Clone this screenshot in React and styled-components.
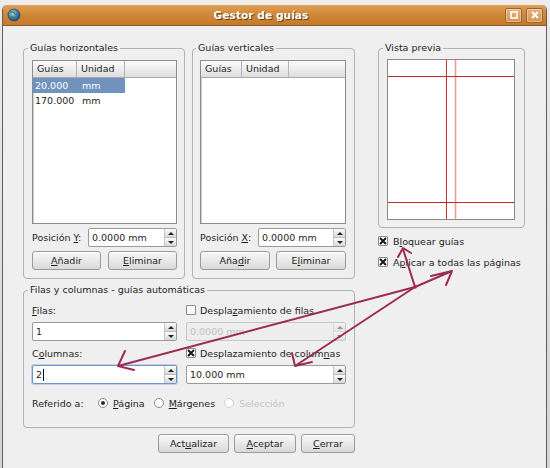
import React from 'react';
import styled, { createGlobalStyle } from 'styled-components';

const GlobalStyle = createGlobalStyle`
  html, body { margin: 0; padding: 0; }
  body {
    width: 550px;
    height: 468px;
    overflow: hidden;
    background: #dcdcdc;
    font-family: "DejaVu Sans", "Liberation Sans", sans-serif;
    font-size: 9.5px;
    color: #1e1e1e;
  }
`;

const Screen = styled.div`
  position: relative;
  width: 550px;
  height: 468px;
  overflow: hidden;
  box-sizing: border-box;
  padding: 5px 3px 0 2px;
  background: linear-gradient(#ececec, #d4d4d4);
`;

const Window = styled.div`
  height: 470px;
  background: #efefef;
  border-left: 1px solid #5f5f5f;
  border-right: 1px solid #5f5f5f;
  border-radius: 5px 5px 0 0;
  overflow: hidden;
`;

const TitleBar = styled.div`
  height: 20px;
  display: flex;
  align-items: center;
  padding: 0 3px 0 2px;
  background: linear-gradient(#e0a057, #d08838 45%, #c47a2c);
  border-bottom: 1px solid #8f5a25;
`;

const Title = styled.div`
  flex: 1;
  text-align: center;
  color: #fff;
  font-weight: bold;
  font-size: 10.5px;
  text-shadow: 1px 1px 0 #6b4316;
  letter-spacing: 0.1px;
`;

const TitleButton = styled.div`
  width: 17px;
  height: 15px;
  box-sizing: border-box;
  margin-left: 4px;
  border: 1px solid #9c6530;
  border-radius: 2px;
  background: linear-gradient(#e6b27a, #d39450);
  box-shadow: inset 0 0 0 1px rgba(255, 255, 255, 0.35);
  display: flex;
  align-items: center;
  justify-content: center;
`;

const Body = styled.div`
  display: flex;
  gap: 23px;
  padding: 16px 20px 0 20px;
`;

const Column = styled.div`
  width: ${p => p.$w}px;
  display: flex;
  flex-direction: column;
`;

const Row = styled.div`
  display: flex;
  gap: ${p => p.$gap || 0}px;
  justify-content: ${p => p.$justify || 'flex-start'};
  align-items: center;
  margin-top: ${p => p.$mt || 0}px;
`;

const Group = styled.fieldset`
  margin: ${p => p.$mt || 0}px 0 0 0;
  min-width: 0;
  box-sizing: border-box;
  width: ${p => p.$w}px;
  border: 1px solid #b1b1b1;
  border-radius: 4px;
  padding: ${p => p.$pad};
  display: flex;
  flex-direction: column;
`;

const Legend = styled.legend`
  padding: 0 2px;
  margin-left: -4px;
  line-height: 12px;
  font-size: 9.5px;
  color: #1e1e1e;
`;

const U = styled.span`
  text-decoration: underline;
  text-underline-offset: 1px;
`;

const ListBox = styled.div`
  height: 164px;
  box-sizing: border-box;
  background: #fff;
  border: 1px solid #8d8d8d;
  box-shadow: inset 1px 1px 0 #c9c9c9;
  display: flex;
  flex-direction: column;
`;

const HeaderRow = styled.div`
  display: flex;
  height: 17px;
  box-sizing: border-box;
  background: linear-gradient(#fbfbfb, #dedede);
  border-bottom: 1px solid #a9a9a9;
`;

const HeadCell = styled.div`
  width: ${p => p.$w}px;
  box-sizing: border-box;
  padding-left: 4px;
  line-height: 16px;
  border-right: 1px solid #b3b3b3;
`;

const ItemRow = styled.div`
  display: flex;
  width: max-content;
  height: 15px;
  line-height: 15px;
  background: ${p => (p.$sel ? '#7093bd' : 'transparent')};
  color: ${p => (p.$sel ? '#fff' : '#1e1e1e')};
`;

const Cell = styled.div`
  width: ${p => p.$w}px;
  padding-left: ${p => p.$pl || 2}px;
  box-sizing: border-box;
`;

const Spin = styled.div`
  display: flex;
  box-sizing: border-box;
  width: ${p => p.$w}px;
  height: 19px;
  background: ${p => (p.$disabled ? '#ededed' : '#fff')};
  border: 1px solid ${p => (p.$focus ? '#6f95c9' : p.$disabled ? '#c6c6c6' : '#9a9a9a')};
  box-shadow: ${p => (p.$focus ? '0 0 0 1px rgba(111,149,201,0.35)' : 'none')};
  border-radius: 2px;
  color: ${p => (p.$disabled ? '#c2c2c2' : '#1e1e1e')};
`;

const SpinText = styled.div`
  flex: 1;
  display: flex;
  align-items: center;
  padding-left: 3px;
  line-height: 17px;
`;

const Caret = styled.span`
  display: inline-block;
  width: 1px;
  height: 12px;
  margin-left: 1px;
  background: #111;
`;

const SpinArrows = styled.div`
  width: 11px;
  display: flex;
  flex-direction: column;
  border-left: 1px solid #c4c4c4;
  opacity: ${p => (p.$disabled ? 0.45 : 1)};
`;

const ArrowHalf = styled.div`
  flex: 1;
  display: flex;
  align-items: center;
  justify-content: center;
  background: linear-gradient(#fbfbfb, #d8d8d8);
  border-bottom: ${p => (p.$top ? '1px solid #bdbdbd' : 'none')};
`;

const Tri = styled.span`
  width: 0;
  height: 0;
  border-left: 3px solid transparent;
  border-right: 3px solid transparent;
  ${p => (p.$down ? 'border-top: 3px solid #222;' : 'border-bottom: 3px solid #222;')}
`;

const Button = styled.button`
  width: ${p => (p.$w ? `${p.$w}px` : 'auto')};
  flex: ${p => (p.$w ? 'none' : 1)};
  height: 19px;
  padding: 0;
  font: inherit;
  color: #1e1e1e;
  border: 1px solid #9b9b9b;
  border-radius: 3px;
  background: linear-gradient(#f8f8f8, #d9d9d9);
  box-shadow: inset 0 1px 0 #fff;
`;

const Check = styled.span`
  width: 10px;
  height: 10px;
  flex: none;
  box-sizing: border-box;
  border: 1px solid #8c8c8c;
  border-radius: 1px;
  background: ${p => (p.$on ? '#fff' : '#fafafa')};
  display: inline-flex;
  align-items: center;
  justify-content: center;
`;

const Radio = styled.span`
  width: 10px;
  height: 10px;
  flex: none;
  box-sizing: border-box;
  border-radius: 50%;
  border: 1px solid ${p => (p.$disabled ? '#d0d0d0' : '#8a8a8a')};
  background: #fff;
  display: inline-flex;
  align-items: center;
  justify-content: center;
  &::after {
    content: '';
    width: 4px;
    height: 4px;
    border-radius: 50%;
    background: #2a2a2a;
    display: ${p => (p.$on ? 'block' : 'none')};
  }
`;

const Option = styled.div`
  display: flex;
  align-items: center;
  gap: ${p => p.$gap || 5}px;
  height: 12px;
  margin-top: ${p => p.$mt || 0}px;
  color: ${p => (p.$disabled ? '#c4c4c4' : '#1e1e1e')};
`;

const Grid = styled.div`
  display: grid;
  grid-template-columns: 145px 160px;
  grid-template-rows: 12px 19px 12px 19px;
  column-gap: 9px;
  row-gap: 6px;
  align-items: center;
`;

const Label = styled.span`
  width: ${p => (p.$w ? `${p.$w}px` : 'auto')};
  flex: none;
`;

const Overlay = styled.svg`
  position: absolute;
  left: 0;
  top: 0;
  pointer-events: none;
`;

function SpinBox({ w, value, disabled, focus }) {
  return (
    <Spin $w={w} $disabled={disabled} $focus={focus}>
      <SpinText>
        {value}
        {focus && <Caret />}
      </SpinText>
      <SpinArrows $disabled={disabled}>
        <ArrowHalf $top>
          <Tri />
        </ArrowHalf>
        <ArrowHalf>
          <Tri $down />
        </ArrowHalf>
      </SpinArrows>
    </Spin>
  );
}

function CheckMark({ on }) {
  return (
    <Check $on={on}>
      {on && (
        <svg width="8" height="8" viewBox="0 0 8 8">
          <path d="M1 1 L7 7 M7 1 L1 7" stroke="#1a1a1a" strokeWidth="2" />
        </svg>
      )}
    </Check>
  );
}

function GuideList({ cols, rows }) {
  return (
    <ListBox>
      <HeaderRow>
        <HeadCell $w={cols[0]}>Guías</HeadCell>
        <HeadCell $w={cols[1]}>Unidad</HeadCell>
      </HeaderRow>
      {rows.map((r, i) => (
        <ItemRow key={r} $sel={i === 0}>
          <Cell $w={cols[0]}>{r}</Cell>
          <Cell $w={cols[1]} $pl={5}>mm</Cell>
        </ItemRow>
      ))}
    </ListBox>
  );
}

export default function App() {
  return (
    <Screen>
      <GlobalStyle />
      <Window>
        <TitleBar>
          <svg width="14" height="14" viewBox="0 0 14 14" style={{ marginLeft: 2 }}>
            <defs>
              <radialGradient id="globe" cx="40%" cy="35%" r="65%">
                <stop offset="0" stopColor="#b9d7f2" />
                <stop offset="0.6" stopColor="#3c77b4" />
                <stop offset="1" stopColor="#1d4a7c" />
              </radialGradient>
            </defs>
            <circle cx="7" cy="7" r="6" fill="url(#globe)" stroke="#2d4e70" strokeWidth="0.8" />
            <path d="M3 5 Q5 3 7 5 T10 6 M4 9 Q6 8 8 10" stroke="#4f8a3a" strokeWidth="1.2" fill="none" />
          </svg>
          <Title>Gestor de guías</Title>
          <TitleButton>
            <svg width="8" height="8" viewBox="0 0 8 8">
              <rect x="1" y="1" width="6" height="6" fill="none" stroke="#fff" strokeWidth="1.6" />
            </svg>
          </TitleButton>
          <TitleButton>
            <svg width="8" height="8" viewBox="0 0 8 8">
              <path d="M1 1 L7 7 M7 1 L1 7" stroke="#fff" strokeWidth="2" />
            </svg>
          </TitleButton>
        </TitleBar>

        <Body>
          <Column $w={332}>
            <Row $gap={7} style={{ alignItems: 'stretch' }}>
              <Group $w={162} $pad="6px 7px 8px 8px">
                <Legend>Guías horizontales</Legend>
                <GuideList cols={[44, 48]} rows={['20.000', '170.000']} />
                <Row $justify="space-between" $mt={4}>
                  <Label>
                    Posición <U>Y</U>:
                  </Label>
                  <SpinBox w={89} value="0.0000 mm" />
                </Row>
                <Row $gap={7} $mt={4}>
                  <Button>
                    <U>A</U>ñadir
                  </Button>
                  <Button>
                    <U>E</U>liminar
                  </Button>
                </Row>
              </Group>

              <Group $w={163} $pad="6px 8px 8px 7px">
                <Legend>Guías verticales</Legend>
                <GuideList cols={[41, 47]} rows={[]} />
                <Row $justify="space-between" $mt={4}>
                  <Label>
                    Posición <U>X</U>:
                  </Label>
                  <SpinBox w={88} value="0.0000 mm" />
                </Row>
                <Row $gap={6} $mt={4}>
                  <Button>
                    Aña<U>d</U>ir
                  </Button>
                  <Button>
                    E<U>l</U>iminar
                  </Button>
                </Row>
              </Group>
            </Row>

            <Group $w={332} $mt={5} $pad="8px 8px 18px 8px">
              <Legend>Filas y columnas - guías automáticas</Legend>
              <Grid>
                <Label>
                  <U>F</U>ilas:
                </Label>
                <Option $gap={4}>
                  <CheckMark on={false} />
                  <span>
                    Despla<U>z</U>amiento de filas
                  </span>
                </Option>
                <SpinBox w={145} value="1" />
                <SpinBox w={160} value="0.0000 mm" disabled />
                <Label>
                  C<U>o</U>lumnas:
                </Label>
                <Option $gap={4}>
                  <CheckMark on />
                  <span>
                    Desplazamiento de colum<U>n</U>as
                  </span>
                </Option>
                <SpinBox w={145} value="2" focus />
                <SpinBox w={160} value="10.000 mm" />
              </Grid>
              <Row $mt={13} $gap={9}>
                <Label $w={57}>Referido a:</Label>
                <Option>
                  <Radio $on />
                  <span>
                    <U>P</U>ágina
                  </span>
                </Option>
                <Option>
                  <Radio />
                  <span>
                    <U>M</U>árgenes
                  </span>
                </Option>
                <Option $disabled>
                  <Radio $disabled />
                  <span>Selección</span>
                </Option>
              </Row>
            </Group>

            <Row $justify="flex-end" $gap={5} $mt={6}>
              <Button $w={71}>
                Act<U>u</U>alizar
              </Button>
              <Button $w={62}>
                <U>A</U>ceptar
              </Button>
              <Button $w={54}>
                <U>C</U>errar
              </Button>
            </Row>
          </Column>

          <Column $w={147}>
            <Group $w={147} $pad="5px 9px 7px 8px">
              <Legend>Vista previa</Legend>
              <svg width="128" height="161" viewBox="0 0 128 161">
                <rect x="0.5" y="0.5" width="127" height="160" fill="#fff" stroke="#8a8a8a" />
                <line x1="59.5" y1="1" x2="59.5" y2="160" stroke="#cf3030" strokeWidth="1" />
                <line x1="68.5" y1="1" x2="68.5" y2="160" stroke="#ee9a9a" strokeWidth="1.6" />
                <line x1="1" y1="17.5" x2="127" y2="17.5" stroke="#c42a2a" strokeWidth="1" />
                <line x1="1" y1="143.5" x2="127" y2="143.5" stroke="#c42a2a" strokeWidth="1" />
              </svg>
            </Group>
            <Option $mt={7}>
              <CheckMark on />
              <span>
                B<U>l</U>oquear guías
              </span>
            </Option>
            <Option $mt={9}>
              <CheckMark on />
              <span>
                A<U>p</U>licar a todas las páginas
              </span>
            </Option>
          </Column>
        </Body>
      </Window>

      <Overlay width="550" height="468" viewBox="0 0 550 468">
        <g stroke="#9b2d55" strokeWidth="2" fill="none" strokeLinecap="round" strokeLinejoin="round">
          <path d="M415 287 L403 249 M398 257 L403 248 L411 253" />
          <path d="M415 287 L452 271 M431 276 L452 271 L446 285" />
          <path d="M415 287 L118 366 M125 351 L118 366 L134 370" />
          <path d="M415 287 L295 366 M292 353 L295 366 L312 362" />
        </g>
        <circle cx="415" cy="287" r="1.8" fill="#9b2d55" />
      </Overlay>
    </Screen>
  );
}
